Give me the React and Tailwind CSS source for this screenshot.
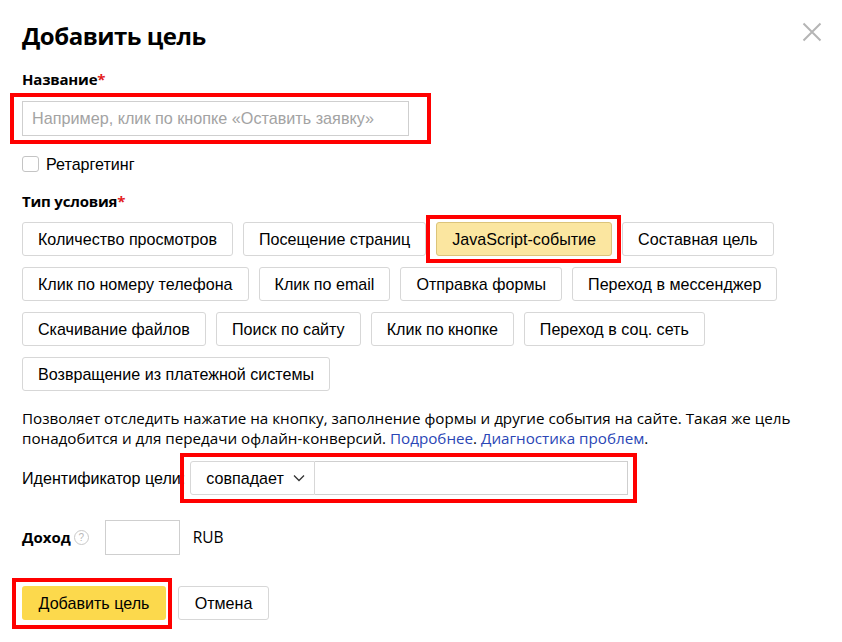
import React from "react";

const head = { fontFamily: '"Open Sans", "Noto Sans", sans-serif' };
const arial = { fontFamily: '"Liberation Sans", Arial, sans-serif' };

const types = [
  ["Количество просмотров", "Посещение страниц", "JavaScript-событие", "Составная цель"],
  ["Клик по номеру телефона", "Клик по email", "Отправка формы", "Переход в мессенджер"],
  ["Скачивание файлов", "Поиск по сайту", "Клик по кнопке", "Переход в соц. сеть"],
  ["Возвращение из платежной системы"],
];

function Mark({ className }) {
  return <div className={`pointer-events-none absolute border-4 border-[#ff0000] ${className}`} />;
}

function TypeButton({ label }) {
  const active = label === "JavaScript-событие";
  if (active) {
    return (
      <div className="relative">
        <button className="h-[34px] rounded-[3px] border border-[#dcc47a] bg-[#fbe6a0] px-[15px] text-[16.1px] text-black">
          {label}
        </button>
        <Mark className="-top-[7px] -bottom-[7px] -left-[10px] -right-[9px]" />
      </div>
    );
  }
  return (
    <button className="h-[34px] rounded-[3px] border border-[#d7d7d7] bg-white px-[15px] text-[16.1px] text-black">
      {label}
    </button>
  );
}

export default function App() {
  return (
    <div className="relative h-[642px] w-[842px] overflow-hidden bg-white px-[22px] text-black" style={arial}>
      <div className="flex items-start justify-between pt-[20px]">
        <h1 className="text-[24px] font-bold leading-[32px] tracking-[-0.5px]" style={head}>
          Добавить цель
        </h1>
        <button className="mr-[-2px] mt-[2px] text-[#b5b5b5]" aria-label="Закрыть">
          <svg width="20" height="20" viewBox="0 0 20 20" fill="none" stroke="currentColor" strokeWidth="2">
            <path d="M1.5 1.5 L18.5 18.5 M18.5 1.5 L1.5 18.5" />
          </svg>
        </button>
      </div>

      <div className="mt-[17px] text-[15px] font-bold leading-[20px] tracking-[-0.2px]" style={head}>
        Название<span className="text-[#e32020]">*</span>
      </div>

      <div className="relative mt-[12px] w-[387px]">
        <input
          className="h-[35px] w-full border border-[#cfcfcf] px-[9px] text-[16.2px] outline-none placeholder:text-[#a3a3a3]"
          placeholder="Например, клик по кнопке «Оставить заявку»"
        />
        <Mark className="-top-[8px] -bottom-[8px] -left-[12px] -right-[22px]" />
      </div>

      <label className="mt-[20px] flex items-center gap-[7px] text-[16.1px] leading-[16px]">
        <span className="h-[16px] w-[17px] rounded-[3px] border border-[#c4c4c4]" />
        Ретаргетинг
      </label>

      <div className="mt-[19px] text-[15px] font-bold leading-[20px] tracking-[-0.2px]" style={head}>
        Тип условия<span className="text-[#e32020]">*</span>
      </div>

      <div className="mt-[11px] flex flex-col gap-[11px]">
        {types.map((row, i) => (
          <div key={i} className="flex gap-[10px]">
            {row.map((t) => (
              <TypeButton key={t} label={t} />
            ))}
          </div>
        ))}
      </div>

      <p className="mt-[17px] text-[15.2px] leading-[20px]" style={head}>
        Позволяет отследить нажатие на кнопку, заполнение формы и другие события на сайте. Такая же цель
        понадобится и для передачи офлайн-конверсий.{" "}
        <a className="text-[#2a46b6]">Подробнее</a>. <a className="text-[#2a46b6]">Диагностика проблем</a>.
      </p>

      <div className="mt-[13px] flex items-center">
        <span className="text-[16.1px]">Идентификатор цели:</span>
        <div className="relative ml-[5px] flex">
          <button className="flex h-[34px] w-[125px] items-center gap-[9px] rounded-l-[3px] border border-[#d7d7d7] pl-[15px] text-[16.1px]">
            совпадает
            <svg width="12" height="8" viewBox="0 0 12 8" fill="none" stroke="#333" strokeWidth="1.3">
              <path d="M1 1.5 L6 6.5 L11 1.5" />
            </svg>
          </button>
          <input className="h-[34px] w-[313px] border border-l-0 border-[#cfcfcf] outline-none" />
          <Mark className="-top-[8px] -bottom-[8px] -left-[10px] -right-[9px]" />
        </div>
      </div>

      <div className="mt-[25px] flex items-center">
        <span className="text-[15px] font-bold" style={head}>
          Доход
        </span>
        <span className="ml-[3px] flex h-[15px] w-[15px] items-center justify-center rounded-full border border-[#c8c8c8] text-[10px] leading-none text-[#b8b8b8]">
          ?
        </span>
        <input className="ml-[16px] h-[35px] w-[75px] border border-[#cfcfcf] outline-none" />
        <span className="ml-[13px] text-[15.5px]" style={head}>
          RUB
        </span>
      </div>

      <div className="mt-[31px] flex gap-[12px]">
        <div className="relative">
          <button className="h-[34px] w-[144px] rounded-[3px] bg-[#fcd94c] text-[16.1px] text-black">
            Добавить цель
          </button>
          <Mark className="-top-[8px] -bottom-[9px] -left-[10px] -right-[6px]" />
        </div>
        <button className="h-[34px] w-[91px] rounded-[3px] border border-[#d7d7d7] bg-white text-[16.1px] text-black">
          Отмена
        </button>
      </div>
    </div>
  );
}
